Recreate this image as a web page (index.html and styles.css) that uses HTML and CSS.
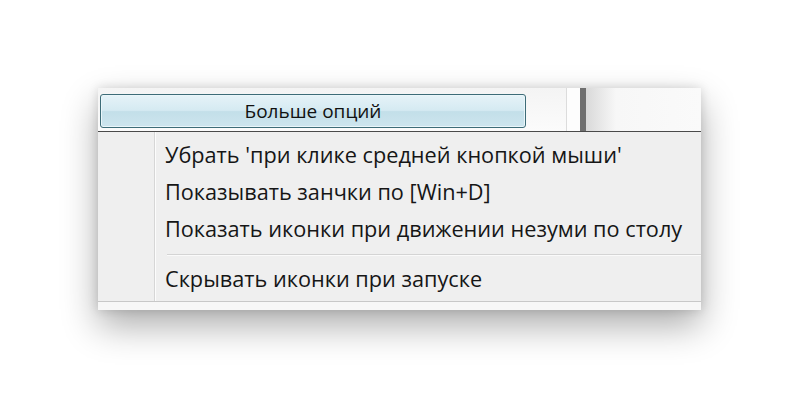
FILE: index.html
```html
<!DOCTYPE html>
<html lang="ru">
<head>
  <meta charset="UTF-8">
  <title>Больше опций</title>
  <link rel="stylesheet" href="styles.css">
</head>
<body>
  <div class="window">
    <div class="toolbar">
      <button class="more">Больше опций</button>
      <div class="splitter"></div>
      <div class="blank"></div>
    </div>
    <div class="menu">
      <div class="gutter"></div>
      <ul class="items">
        <li class="item">Убрать 'при клике средней кнопкой мыши'</li>
        <li class="item">Показывать занчки по [Win+D]</li>
        <li class="item">Показать иконки при движении незуми по столу</li>
        <li class="sep"></li>
        <li class="item">Скрывать иконки при запуске</li>
      </ul>
    </div>
  </div>
</body>
</html>
```

FILE: styles.css
```css
body {
  margin: 0;
  padding: 88px 0 0 98px;
  height: 400px;
  box-sizing: border-box;
  background-color: #fff;
  font-family: "Open Sans", "Noto Sans", sans-serif;
  color: #161616;
}

.window {
  width: 603px;
  background-color: #efefef;
  box-shadow: 0 16px 34px rgba(0, 0, 0, 0.32), 0 0 10px rgba(0, 0, 0, 0.14);
  border-bottom: 8px solid #f7f7f7;
}

.toolbar {
  display: flex;
  align-items: stretch;
  height: 43px;
  background: linear-gradient(#f4f4f4, #fbfbfb);
  border-bottom: 1px solid #4a4a4a;
}

.more {
  width: 426px;
  margin: 6px 0 3px 2px;
  padding: 0;
  border: 1px solid #3d6c78;
  border-radius: 3px;
  background: linear-gradient(#e6f3f8 0%, #d5eaf2 48%, #c3dfe9 52%, #cde5ee 100%);
  box-shadow: inset 0 0 0 1px #eaf6fa;
  font-family: "Open Sans", "Noto Sans", sans-serif;
  font-size: 19px;
  color: #111;
}

.splitter {
  width: 13px;
  margin-left: 40px;
  background-color: #fdfdfd;
  border-left: 1px solid #dcdcdc;
  border-right: 6px solid #6f6f6f;
}

.blank {
  flex: 1;
  background: linear-gradient(90deg, #d9d9d9, #f7f7f7 30px, #fafafa);
}

.menu {
  display: flex;
  border-bottom: 1px solid #c8c8c8;
}

.gutter {
  width: 56px;
  border-right: 1px solid #d6d6d6;
  box-shadow: 1px 0 0 #fcfcfc;
}

.items {
  flex: 1;
  list-style: none;
  margin: 0;
  padding: 4px 0 4px 10px;
}

.item {
  height: 37px;
  line-height: 37px;
  font-size: 21.7px;
  white-space: nowrap;
}

.sep {
  height: 1px;
  margin: 7px 0 5px 2px;
  background-color: #d4d4d4;
  box-shadow: 0 1px 0 #fafafa;
}
```
